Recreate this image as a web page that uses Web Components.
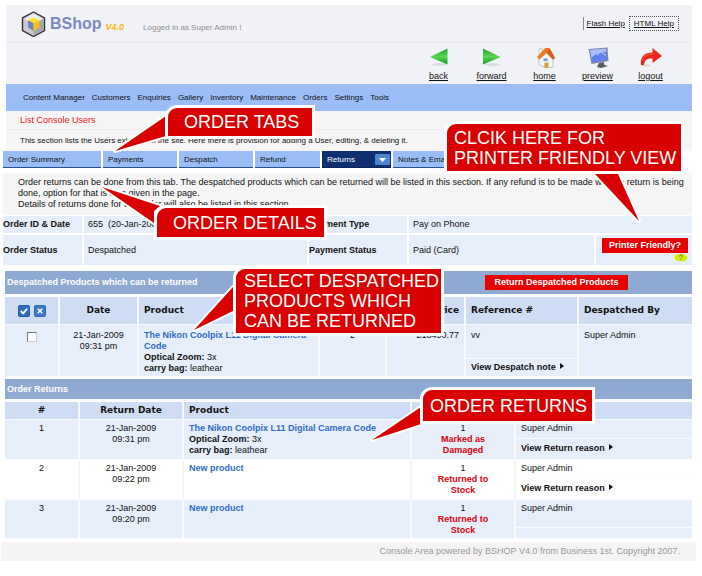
<!DOCTYPE html>
<html lang="en">
<head>
<meta charset="utf-8">
<title>BShop V4.0 – Order Returns</title>
<style>
html{background:#fff}
body{margin:0;padding:5px 0 12px;position:relative;font:9px/11px "Liberation Sans",Arial,sans-serif;color:#111}
</style>
</head>
<body>
<bshop-app></bshop-app>
<script>
const define=(name,html,setup)=>customElements.define(name,class extends HTMLElement{
  constructor(){
    super();
    const t=document.createElement('template');
    t.innerHTML=html;
    this.attachShadow({mode:'open'}).append(t.content.cloneNode(true));
  }
  connectedCallback(){ if(setup) setup(this,this.shadowRoot); }
});

/* Toolbar shortcut: icon above an underlined label */
define('tool-link',`<style>
:host{display:block;width:53px;text-align:center}
a{display:flex;flex-direction:column;align-items:center;gap:3px;color:#111;font-size:9px}
::slotted(svg){display:block;width:24px;height:22px}
</style><a href="#"><slot name="icon"></slot><span></span></a>`,
(h,r)=>r.querySelector('span').textContent=h.getAttribute('label'));

define('shop-header',`<style>
:host{display:block;background:#f1f2f6}
.top{display:flex;align-items:center;height:37px;padding:0 13px 0 15px;border-bottom:1px solid #e6e8ee}
.logo{width:25px;height:26px}
.name{font:bold 16px/20px "Liberation Sans",Arial,sans-serif;color:#7b88c2;margin-left:4px}
.ver{font:italic bold 9px/14px "Liberation Sans",Arial,sans-serif;color:#fcb913;margin:6px 0 0 4px}
.who{margin-left:19px;margin-top:8px;color:#8d8d92;font-size:8px}
.help{margin-left:auto;display:flex;align-items:center;font-size:8px;gap:1px}
.help a{color:#111;border-left:1px solid #888;padding:1px 3px}
.help a+a{border:1px dotted #555;padding:1px 4px}
.tools{display:flex;justify-content:flex-end;height:38px;padding:3px 15px 0 0}
</style>
<div class="top">
<svg class="logo" viewBox="0 0 25 26"><path d="M12.500 1 23.500 7v12.500L12.500 25.500 1.500 19.500V7z" fill="#c9c9cf" stroke="#333" stroke-width="1.400"/><path d="M12.500 2.500 22 8l-9.500 5L3 8z" fill="#ececf0"/><path d="M12.500 13 22 8v11l-9.500 5.500z" fill="#a6a7ae"/><path d="M7 9.500 12.500 6.500 18.500 9.500 12.500 12z" fill="#ffe11e"/><path d="M7 9.500 12.500 12v8L7 16.500z" fill="#7380c8"/><path d="M12.500 12 18.500 9.500v7L12.500 20z" fill="#f5c30f"/></svg>
<span class="name">BShop</span><span class="ver">V4.0</span><span class="who">Logged in as Super Admin !</span>
<nav class="help"><a href="#">Flash Help</a><a href="#">HTML Help</a></nav>
</div>
<nav class="tools">
<tool-link label="back"><svg slot="icon" viewBox="0 0 24 22"><defs><linearGradient id="g" x2="0" y2="1"><stop offset="0" stop-color="#1fa33a"/><stop offset=".5" stop-color="#55d84b"/><stop offset="1" stop-color="#1a9a2c"/></linearGradient></defs><ellipse cx="12" cy="18.500" rx="8" ry="1.500" fill="#d8ddd9"/><path d="M3 11 20.500 2.500V18.500z" fill="url(#g)"/></svg></tool-link>
<tool-link label="forward"><svg slot="icon" viewBox="0 0 24 22"><defs><linearGradient id="f" x2="0" y2="1"><stop offset="0" stop-color="#1fa33a"/><stop offset=".5" stop-color="#55d84b"/><stop offset="1" stop-color="#1a9a2c"/></linearGradient></defs><ellipse cx="12" cy="18.500" rx="8" ry="1.500" fill="#d8ddd9"/><path d="M20.500 11 3 2.500V18.500z" fill="url(#f)"/></svg></tool-link>
<tool-link label="home"><svg slot="icon" viewBox="0 0 24 22"><path d="M6 11 13 6l7 6v9l-7 1-7-3z" fill="#f4f5f8" stroke="#a9b0c4" stroke-width=".7"/><path d="M6 2.500h3V7L6 9z" fill="#f6f6f6" stroke="#b9a48f" stroke-width=".5"/><path d="M4 11 12 2h4.500l5.500 10-2 1.500L13.500 7 6.500 13.500z" fill="#ee7c25"/><path d="M13.500 7 16.500 2l5.500 10-2 1.500z" fill="#d4611a"/><path d="M10.500 12.500h4V15h-4z" fill="#6e95dc"/><path d="M11.500 16.500h4V22h-4z" fill="#d3a22f"/></svg></tool-link>
<tool-link label="preview"><svg slot="icon" viewBox="0 0 24 22"><path d="M2.500 3 21.500 1.500 22.500 15 5.500 18z" fill="#7f88a3"/><path d="M3.800 4 20 2.500 21 13.800 6.300 16.500z" fill="#5f80f0"/><path d="M3.800 4 20 2.500 20.300 6C14 5.500 9 8 5.500 12z" fill="#a9bdfb"/><path d="M11 9 14.500 5.500 20 9.500" stroke="#d5e0ff" fill="none"/><path d="M13 17 17.500 16 18.500 19 22 20 15 22 11 21z" fill="#555b66"/></svg></tool-link>
<tool-link label="logout"><svg slot="icon" viewBox="0 0 24 22"><ellipse cx="7" cy="19.500" rx="5" ry="1" fill="#dcd6d8"/><path d="M2 19C1 10 6 6.500 13.500 6.500V2L23 10l-9.500 7v-4.500C8 12 5.500 14 5 19z" fill="#e8291a"/><path d="M3.500 14C5 9.500 8 8 14.500 8" fill="none" stroke="#f2664c"/></svg></tool-link>
</nav>`);

define('shop-menu',`<style>
:host{display:block;background:#9bbdf5}
nav{display:flex;align-items:center;height:27px;padding-left:17px;gap:7px;font-size:8px}
a{color:#111;text-decoration:none}
</style><nav></nav>`,(h,r)=>{
  r.querySelector('nav').innerHTML=h.getAttribute('items').split(',').map(s=>`<a href="#">${s}</a>`).join('');
});

define('page-intro',`<style>
:host{display:block;background:#f5f5f5}
h1,p{margin:0;font:inherit;padding:0 14px}
h1{color:#e8141c;line-height:18px;border-bottom:1px solid #ececec}
p{font-size:8px;line-height:21px}
</style><h1><slot name="title"></slot></h1><p><slot></slot></p>`);

define('order-tabs',`<style>
:host{display:block}
div{display:flex;gap:2px;width:fit-content}
button{appearance:none;border:0;border-bottom:1px solid #27508f;background:#9bbdf5;color:#111;font:inherit;font-size:8px;text-align:left;
 height:17px;padding:1px 5px 0;width:74px;display:flex;align-items:center;justify-content:space-between}
button:first-child{width:98px}
button:nth-child(4){width:65px}
.on{background:#0f2f6e;border-color:#0a2358;color:#fff;width:69px;padding-right:1px}
svg{width:15px;height:11px;flex:none}
</style><div role="tablist">
<button role="tab">Order Summary</button><button role="tab">Payments</button><button role="tab">Despatch</button><button role="tab">Refund</button><button role="tab" class="on" aria-selected="true">Returns<svg viewBox="0 0 15 11"><rect width="15" height="11" rx="1" fill="#4f86cf"/><path d="M4 4h7L7.500 8z" fill="#fff"/></svg></button><button role="tab">Notes &amp; Emails</button>
</div>`);

define('help-text',`<style>
:host{display:block;background:#f5f5f5;padding:4px 0 4px 15px;margin-top:5px;min-height:34px}
</style><slot></slot>`);

define('order-info',`<style>
:host{display:block;margin-top:1px}
table{width:100%;table-layout:fixed;border-collapse:separate;border-spacing:0}
th,td{box-sizing:border-box;background:#e6eefa;padding:0 4px;text-align:left;border:0 solid #fff;border-right-width:2px}
tr>:last-child{border-right:0}
th{padding:0;font-weight:bold}
tr:first-child>*{height:19px;border-bottom-width:2px}
tr+tr>*{height:30px}
.pf{vertical-align:top;text-align:right;padding:3px 4px 0;line-height:0}
button{appearance:none;border:0;background:#e60000;color:#fff;font:bold 9px/15px "Liberation Sans",Arial,sans-serif;padding:0;width:86px;height:15px;text-align:center}
svg{width:14px;height:9px;display:block;margin-left:auto}
</style><table><colgroup><col style="width:81px"><col style="width:225px"><col style="width:100px"><col><col style="width:96px"></colgroup>
<tr><th scope="row">Order ID &amp; Date</th><td>655 &nbsp;(20-Jan-2009)</td><th scope="row">Payment Type</th><td colspan="2">Pay on Phone</td></tr>
<tr><th scope="row">Order Status</th><td>Despatched</td><th scope="row">Payment Status</th><td>Paid (Card)</td><td class="pf"><button>Printer Friendly?</button><svg viewBox="0 0 14 9"><ellipse cx="7" cy="4.500" rx="6.500" ry="3.800" fill="#d4ee00"/><path d="M9 7l2.500 2-.5-3z" fill="#d4ee00"/><path d="M5.500 3.500C5.500 1.500 8.800 1.500 8.500 3.300 8.300 4.300 7 4.300 7 5.300M7 6.300v1" fill="none" stroke="#5e7a10"/></svg></td></tr></table>`);

define('section-panel',`<style>
:host{display:block;margin-top:6px}
header{display:flex;align-items:center;background:#8faad2;color:#fff;min-height:20px;padding-left:2px}
h2{margin:0;flex:none;width:478px;font:bold 9px/11px "Liberation Sans",Arial,sans-serif}
main{padding-top:3px}
</style><header><h2><slot name="title"></slot></h2><slot name="action"></slot></header><main><slot></slot></main>`);

define('red-button',`<style>
:host{display:block;padding:4px 0}
button{display:block;appearance:none;border:0;background:#e60000;color:#fff;font:bold 9px/15px "Liberation Sans",Arial,sans-serif;width:143px;height:15px;padding:0}
</style><button><slot></slot></button>`);

const tableCss=`
:host{display:block}
table{width:100%;table-layout:fixed;border-collapse:separate;border-spacing:0}
th{background:#cfddf4;font:bold 9px/11px "DejaVu Sans",Verdana,sans-serif;text-align:left;padding:0 5px}
td{background:#e6eefa;vertical-align:top;padding:3px 5px 0}
th,td{border:0 solid #f8faff;border-right-width:2px;border-bottom-width:1px}
tr>:last-child{border-right:0}
.c{text-align:center}.r{text-align:right}
td a.p{color:#2f6cc4;font-weight:bold;text-decoration:none}
a.v{color:#111;font-weight:bold;text-decoration:none}
a.v::after{content:"";display:inline-block;margin-left:4px;border:3px solid transparent;border-left:4px solid #111;border-right:0;vertical-align:1px}
`;

define('despatch-table',`<style>${tableCss}
th{height:27px}
.icons svg{width:12px;height:12px;vertical-align:middle}
.icons svg+svg{margin-left:4px}
input{appearance:none;width:10px;height:10px;margin:2px 0 0;background:#fff;border:1px solid #777;border-right-color:#ccc;border-bottom-color:#ccc}
td{padding-top:5px}
.vv{height:28px}.sub{height:14px;padding-top:3px}
</style><table><colgroup><col style="width:55px"><col style="width:79px"><col><col style="width:67px"><col style="width:79px"><col style="width:113px"><col style="width:113px"></colgroup>
<tr><th class="c icons" scope="col"><svg viewBox="0 0 13 13"><rect x=".5" y=".5" width="12" height="12" rx="1.500" fill="#2f6fbd" stroke="#1d5499"/><path d="M3 6.500 5.500 9 10 4" fill="none" stroke="#fff" stroke-width="2"/></svg><svg viewBox="0 0 13 13"><rect x=".5" y=".5" width="12" height="12" rx="1.500" fill="#3c7ac5" stroke="#2a62a8"/><path d="M4 4l5 5M9 4 4 9" fill="none" stroke="#fff" stroke-width="1.500"/></svg></th><th class="c" scope="col">Date</th><th scope="col">Product</th><th scope="col" aria-label="Quantity"></th><th class="r" scope="col">Price</th><th scope="col">Reference #</th><th scope="col">Despatched By</th></tr>
<tr><td class="c" rowspan="2"><input type="checkbox" aria-label="Select product"></td><td class="c" rowspan="2">21-Jan-2009<br>09:31 pm</td><td rowspan="2"><a class="p" href="#">The Nikon Coolpix L11 Digital Camera Code</a><br><b>Optical Zoom:</b> 3x<br><b>carry bag:</b> leathear</td><td class="c" rowspan="2">2</td><td class="r" rowspan="2">£13490.77</td><td class="vv" style="border-right-width:2px">vv</td><td rowspan="2" style="border-right:0">Super Admin</td></tr>
<tr><td class="sub" style="border-right:2px solid #f8faff"><a class="v" href="#">View Despatch note</a></td></tr></table>`);

define('returns-table',`<style>${tableCss}
th{height:17px}
.a td{height:15px}.b td{height:16px;padding-top:4px}
tbody:nth-of-type(odd) td{background:#fff;border-right-color:#f5f5f5}
.empty .a td{height:24px}.empty .b td{height:10px;padding:0}
.s{color:#dd0010;font-weight:bold;text-align:center;display:block}
.q{padding:3px 20px 0}
</style><table><colgroup><col style="width:75px"><col style="width:104px"><col><col style="width:104px"><col style="width:176px"></colgroup>
<tbody><tr><th class="c" scope="col">#</th><th class="c" scope="col">Return Date</th><th scope="col">Product</th><th scope="col" aria-label="Quantity"></th><th scope="col" aria-label="Details"></th></tr></tbody></table>`,
(h,r)=>{
  const rows=[
   ['09:31','The Nikon Coolpix L11 Digital Camera Code','<br><b>Optical Zoom:</b> 3x<br><b>carry bag:</b> leathear','Marked as Damaged',1],
   ['09:22','New product','','Returned to Stock',1],
   ['09:20','New product','','Returned to Stock',0]];
  r.querySelector('table').insertAdjacentHTML('beforeend',rows.map(([t,p,x,s,v],i)=>`<tbody class="${v?'':'empty'}"><tr class="a">
<td class="c" rowspan="2">${i+1}</td><td class="c" rowspan="2">21-Jan-2009<br>${t} pm</td><td rowspan="2"><a class="p" href="#">${p}</a>${x}</td><td class="c q" rowspan="2" style="border-right-width:2px">1<span class="s">${s}</span></td><td>Super Admin</td></tr>
<tr class="b"><td>${v?'<a class="v" href="#">View Return reason</a>':''}</td></tr></tbody>`).join(''));
});

define('shop-footer',`<style>
:host{display:block;background:#f5f3f4;color:#9a9a9a;text-align:right;line-height:19px;padding-right:16px;margin:3px 6px 0 1px}
</style><slot></slot>`);

/* Annotation pinned over the page; the pointer polygon uses page coordinates */
define('note-callout',`<style>
:host{position:absolute;left:0;top:0;color:#fff;font:18px/20px "Liberation Sans",Arial,sans-serif;white-space:nowrap}
svg{position:absolute;left:0;top:0;width:702px;height:576px;overflow:visible;pointer-events:none}
div{position:absolute;box-sizing:border-box;background:#d80000;border:3px solid #fff;border-radius:12px 0 0 0;display:flex;align-items:center}
</style><svg viewBox="0 0 702 576"><polygon fill="#d80000" stroke="#fff" stroke-width="4" paint-order="stroke" stroke-linejoin="round"/></svg><div><slot></slot></div>`,
(h,r)=>{
  const [x,y,w,ht]=h.getAttribute('box').split(' '), d=r.querySelector('div').style;
  d.left=x+'px';d.top=y+'px';d.width=w+'px';d.height=ht+'px';d.paddingLeft=h.getAttribute('inset')+'px';
  r.querySelector('polygon').setAttribute('points',h.getAttribute('pointer'));
});

define('bshop-app',`<style>
:host{display:block}
.in{margin:0 10px 0 6px}.mid{margin:0 10px 0 3px}.sec{margin:0 10px 0 5px}
.next{margin-top:2px}
</style>
<div class="in"><shop-header></shop-header>
<shop-menu items="Content Manager,Customers,Enquiries,Gallery,Inventory,Maintenance,Orders,Settings,Tools"></shop-menu>
<page-intro><span slot="title">List Console Users</span>This section lists the Users existing on the site. Here there is provision for adding a User, editing, &amp; deleting it.</page-intro></div>
<div class="mid"><order-tabs></order-tabs>
<help-text>Order returns can be done from this tab. The despatched products which can be returned will be listed in this section. If any refund is to be made when a return is being done, option for that is also given in the page.<br>Details of returns done for this order will also be listed in this section.</help-text>
<order-info></order-info></div>
<div class="sec"><section-panel><span slot="title">Despatched Products which can be returned</span><red-button slot="action">Return Despatched Products</red-button><despatch-table></despatch-table></section-panel>
<section-panel class="next"><span slot="title">Order Returns</span><returns-table></returns-table></section-panel></div>
<shop-footer>Console Area powered by BSHOP V4.0 from Business 1st. Copyright 2007.</shop-footer>
<note-callout box="165 105 150 34" inset="16" pointer="115,151 166,116 166,136">ORDER TABS</note-callout>
<note-callout box="444 121 240 53" inset="7" pointer="595,174 618,174 639,221">CLCIK HERE FOR<br>PRINTER FRIENDLY VIEW</note-callout>
<note-callout box="154 205 173 35" inset="16" pointer="102,187 160,206 154,211 154,223">ORDER DETAILS</note-callout>
<note-callout box="233 266 211 70" inset="8" pointer="194,330 233,287 233,311">SELECT DESPATCHED<br>PRODUCTS WHICH<br>CAN BE RETURNED</note-callout>
<note-callout box="420 387 175 37" inset="7" pointer="372,440 421,407 421,424">ORDER RETURNS</note-callout>`);
</script>
</body>
</html>
